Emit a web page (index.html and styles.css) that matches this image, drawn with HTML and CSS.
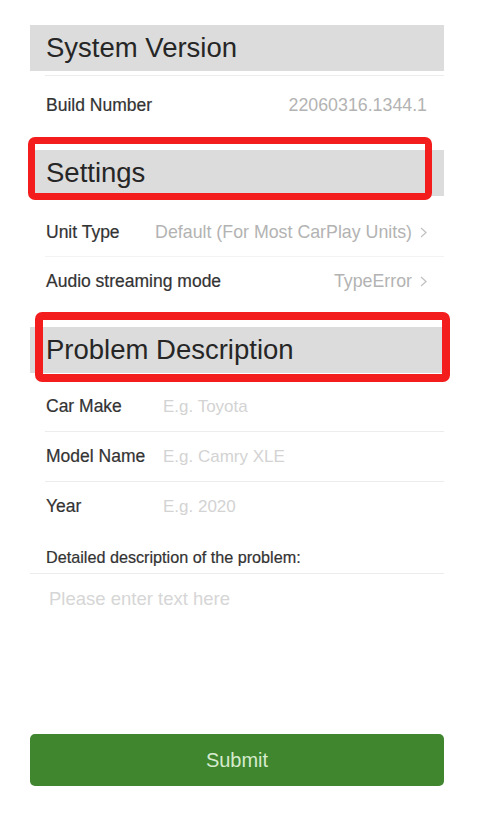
FILE: index.html
```html
<!DOCTYPE html>
<html lang="en">
<head>
<meta charset="utf-8">
<title>Feedback</title>
<link rel="stylesheet" href="styles.css">
</head>
<body>
<div class="page">
  <section class="section">
    <div class="sec-header"><span>System Version</span></div>
    <div class="divider indent first-divider"></div>
    <div class="row row-tall">
      <span class="label">Build Number</span>
      <span class="value">22060316.1344.1</span>
    </div>
  </section>

  <section class="section settings">
    <div class="sec-header">
      <span>Settings</span>
      <div class="mark mark-settings"></div>
    </div>
    <div class="list settings-list">
      <div class="row">
        <span class="label">Unit Type</span>
        <span class="value">Default (For Most CarPlay Units)<svg class="chev" viewBox="0 0 7 11" width="7" height="11"><polyline points="1,1 6,5.5 1,10" fill="none" stroke="#c2c2c2" stroke-width="1.3"/></svg></span>
      </div>
      <div class="divider indent faint"></div>
      <div class="row">
        <span class="label">Audio streaming mode</span>
        <span class="value">TypeError<svg class="chev" viewBox="0 0 7 11" width="7" height="11"><polyline points="1,1 6,5.5 1,10" fill="none" stroke="#c2c2c2" stroke-width="1.3"/></svg></span>
      </div>
    </div>
  </section>

  <section class="section problem">
    <div class="sec-header">
      <span>Problem Description</span>
      <div class="mark mark-problem"></div>
    </div>
    <div class="list problem-list">
      <div class="row field">
        <span class="label field-label">Car Make</span>
        <input class="field-input" type="text" placeholder="E.g. Toyota">
      </div>
      <div class="divider indent"></div>
      <div class="row field">
        <span class="label field-label">Model Name</span>
        <input class="field-input" type="text" placeholder="E.g. Camry XLE">
      </div>
      <div class="divider indent"></div>
      <div class="row field">
        <span class="label field-label">Year</span>
        <input class="field-input" type="text" placeholder="E.g. 2020">
      </div>
      <div class="desc-label">Detailed description of the problem:</div>
      <div class="divider"></div>
      <textarea class="desc-input" placeholder="Please enter text here"></textarea>
    </div>
  </section>

  <button class="submit" type="button">Submit</button>
</div>
</body>
</html>
```

FILE: styles.css
```css
* { box-sizing: border-box; }

html, body {
  margin: 0;
  padding: 0;
  background: #ffffff;
}

body {
  font-family: "Liberation Sans", Arial, Helvetica, sans-serif;
  color: #333333;
}

.page {
  width: 478px;
  padding: 25px 34px 0 30px;
  display: flex;
  flex-direction: column;
}

.section {
  display: flex;
  flex-direction: column;
}

.sec-header {
  position: relative;
  height: 46px;
  background: #dcdcdc;
  display: flex;
  align-items: center;
  padding-left: 16px;
  font-size: 27.5px;
  color: #262626;
}

.divider {
  height: 1px;
  background: #ececec;
  flex: none;
}

.divider.indent { margin-left: 15px; }
.divider.faint { background: #f3f3f3; }
.first-divider { margin-top: 4px; }

.row {
  display: flex;
  align-items: center;
  justify-content: space-between;
  height: 48px;
  padding: 0 17px 0 16px;
  font-size: 17.5px;
}

.row-tall { height: 58px; }

.label {
  color: #333333;
  white-space: nowrap;
  -webkit-text-stroke: 0.2px #333333;
}

.value {
  color: #b3b3b3;
  font-size: 17.8px;
  white-space: nowrap;
  display: flex;
  align-items: center;
}

.chev {
  margin-left: 8px;
  flex: none;
}

.settings { margin-top: 16px; }
.settings-list { padding-top: 12px; }

.problem { margin-top: 22px; }
.problem-list {
  padding-top: 9px;
  display: flex;
  flex-direction: column;
}

.row.field {
  height: 49px;
  justify-content: flex-start;
}

.field-label {
  width: 117px;
  flex: none;
}

.field-input {
  flex: 1;
  min-width: 0;
  border: none;
  outline: none;
  background: transparent;
  padding: 0;
  margin: 0;
  font: inherit;
  font-size: 17px;
  color: #333333;
}

.field-input::placeholder { color: #d3d3d3; }

.desc-label {
  padding: 17px 0 7px 16px;
  font-size: 16.2px;
  line-height: 18px;
  color: #333333;
  -webkit-text-stroke: 0.2px #333333;
}

.desc-input {
  display: block;
  height: 160px;
  width: 100%;
  border: none;
  outline: none;
  resize: none;
  background: transparent;
  margin: 0;
  padding: 14px 0 0 19px;
  font-family: inherit;
  font-size: 18.5px;
  line-height: 22px;
  color: #333333;
}

.desc-input::placeholder { color: #d6d6d6; }

.submit {
  height: 52px;
  width: 100%;
  border: none;
  border-radius: 5px;
  background: #40862f;
  color: #d6ebcd;
  font-family: inherit;
  font-size: 20px;
  padding: 0;
  margin: 0;
}

.mark {
  position: absolute;
  border-style: solid;
  border-color: #f41d1d;
  pointer-events: none;
}

.mark-settings {
  left: -2px;
  top: -13px;
  width: 404px;
  height: 63px;
  border-width: 7px;
  border-radius: 7px;
}

.mark-problem {
  left: 5px;
  top: -15px;
  width: 415px;
  height: 70px;
  border-width: 8px;
  border-radius: 7px;
}
```
